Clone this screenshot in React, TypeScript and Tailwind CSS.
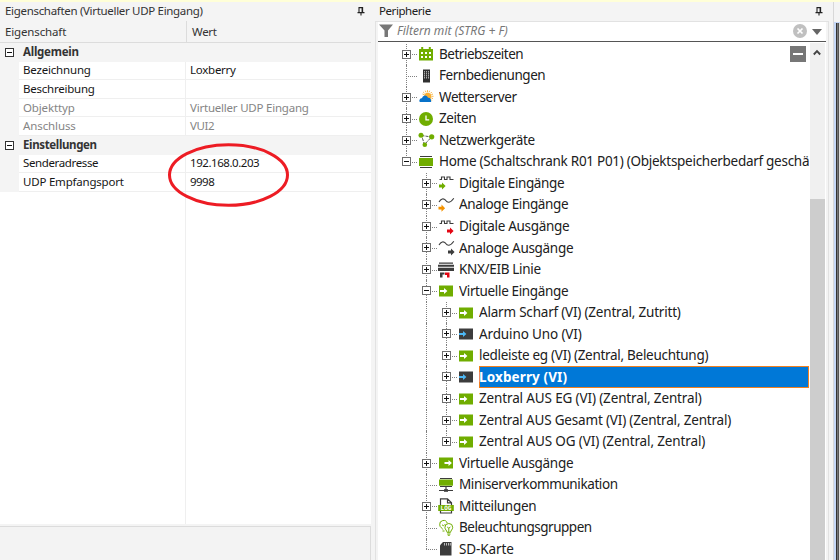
import { useLayoutEffect, useRef, useState } from "react";
import type { ReactNode } from "react";

/** One line of text whose tracking is adjusted so that it fills `width` pixels. */
function Fit({ text, width, className = "" }: { text: string; width: number; className?: string }) {
  const ref = useRef<HTMLSpanElement>(null);
  const [spacing, setSpacing] = useState(0);
  useLayoutEffect(() => {
    const el = ref.current;
    if (!el) return;
    el.style.letterSpacing = "0px";
    const natural = el.getBoundingClientRect().width;
    const next = (width - 0.8 - natural) / text.length;
    el.style.letterSpacing = `${next}px`;
    setSpacing(next);
  }, [text, width]);
  return (
    <span ref={ref} className={`inline-block whitespace-pre ${className}`} style={{ letterSpacing: `${spacing}px` }}>
      {text}
    </span>
  );
}

const GREEN = "#70ad00";
const DARK = "#3c3c3c";

function Svg({ children }: { children: ReactNode }) {
  return (
    <svg width="16" height="16" viewBox="0 0 16 16" className="block shrink-0 overflow-visible">
      {children}
    </svg>
  );
}

function Block({ fill, arrow, x }: { fill: string; arrow: string; x: number }) {
  return (
    <Svg>
      <rect x="0" y="2.5" width="14" height="11" fill={fill} />
      <path d={`M${x} 7h4V4.9l3.4 3.1-3.4 3.100V9h-4z`} fill={arrow} />
    </Svg>
  );
}

function SmallArrow({ x, y, fill }: { x: number; y: number; fill: string }) {
  return <path d={`M${x} ${y - 1.4}h3v-2.200l3.600 3.600-3.600 3.600v-2.200h-3z`} fill={fill} />;
}

const SQUARE = "M.5 4.500h2V2h3v2.500h2.500V2h3v2.500h3.500";
const WAVE = "M0 5C2 1.600 4.500.9 6.500 3.200 8.500 6 11 6.500 14.800 1.200";

const icons: Record<string, ReactNode> = {
  calendar: (
    <Svg>
      <path d="M0 3h2.200V1h2v2h5.600V1h2v2H14v11.500H0z" fill={GREEN} />
      <path d="M2 6h2v2H2zM6 6h2v2H6zM10 6h2v2h-2zM2 10h2v2H2zM6 10h2v2H6zM10 10h2v2h-2z" fill="#fff" />
    </Svg>
  ),
  remote: (
    <Svg>
      <rect x="4" y="1.500" width="7" height="13" fill="#303030" />
      <path d="M5.500 3v8M7.500 3v8M9.500 3v8" stroke="#ccc" strokeWidth=".8" strokeDasharray="1.500 .5" />
    </Svg>
  ),
  weather: (
    <Svg>
      <path
        d="M8.500 1.200v2M4.200 3l1.300 1.300M12.800 3l-1.300 1.300M12.500 7.300h2M12.800 11.500l-1.300-1.300M6.300 1.700l.7 1.600M10.700 1.700 10 3.300M14 5l-1.700.7M14 9.600l-1.700-.7M3.500 5l1.600.7"
        stroke="#f5b649"
        strokeWidth="1"
      />
      <circle cx="8.700" cy="7.300" r="3.600" fill="#fbb034" />
      <path d="M.8 13C-.5 11 1.500 9 3 9.300 4 6 7.500 5.500 9 8.800c2-.3 3.200 1 3.200 4.200z" fill="#0872c9" />
    </Svg>
  ),
  clock: (
    <Svg>
      <circle cx="7" cy="8" r="7" fill={GREEN} />
      <path d="M7 4.500V8.800h3.200" fill="none" stroke="#fff" strokeWidth="1.300" />
    </Svg>
  ),
  network: (
    <Svg>
      <path d="M2.500 3.500 12.500 5 5.500 12.500z" fill="none" stroke="#555" strokeWidth="1" strokeDasharray="3 1" />
      <circle cx="2" cy="3.200" r="2.500" fill={GREEN} />
      <circle cx="12.700" cy="4.800" r="2.600" fill={GREEN} />
      <circle cx="5.800" cy="12.800" r="2.300" fill={GREEN} />
    </Svg>
  ),
  home: (
    <Svg>
      <path d="M1 2.500h12M1 13.500h12" stroke={DARK} strokeWidth="1.100" />
      <rect y="4" width="14" height="8" fill={GREEN} />
    </Svg>
  ),
  din: (
    <Svg>
      <path d={SQUARE} fill="none" stroke={DARK} strokeWidth="1.100" />
      <SmallArrow x={0} y={11} fill={GREEN} />
    </Svg>
  ),
  ain: (
    <Svg>
      <path d={WAVE} fill="none" stroke={DARK} strokeWidth="1.100" />
      <SmallArrow x={-0.5} y={11.2} fill="#f39200" />
    </Svg>
  ),
  dout: (
    <Svg>
      <path d={SQUARE} fill="none" stroke={DARK} strokeWidth="1.100" />
      <SmallArrow x={8} y={12} fill="#e30613" />
    </Svg>
  ),
  aout: (
    <Svg>
      <path d={WAVE} fill="none" stroke={DARK} strokeWidth="1.100" />
      <SmallArrow x={9} y={12} fill={DARK} />
    </Svg>
  ),
  knx: (
    <Svg>
      <path d="M0 .5h14v1.200H0zM-1 2.700h16v2H-1zM-1 5.700h16v3.300H-1z" fill={DARK} />
      <path d="M1 10.500h4.500v2H3.500v3H1z" fill={DARK} />
      <path d="M6 10.500h4.500v5H8v-2.500H6z" fill="#e30613" />
    </Svg>
  ),
  vin: <Block fill={GREEN} arrow="#fff" x={1} />,
  vdark: <Block fill={DARK} arrow="#4db8f5" x={0} />,
  vout: <Block fill={GREEN} arrow="#fff" x={5.5} />,
  mini: (
    <Svg>
      <path d="M1 1.500h12M1 9.500h12" stroke={DARK} strokeWidth="1.100" />
      <rect y="2.500" width="14" height="6.200" fill={GREEN} />
      <path d="M7 10v3M0 13.500h14" stroke={DARK} strokeWidth="1.200" />
      <path d="M5 12.200h4v2.600H5z" fill={DARK} />
    </Svg>
  ),
  log: (
    <Svg>
      <path d="M1.500 7V.8h7l4 4V7M1.500 13v2h11v-2M8.500.8v4h4" fill="none" stroke={DARK} strokeWidth="1.200" />
      <path d="M-.8 7h15.600v6H-.8z" fill={GREEN} />
      <text x="7" y="12" textAnchor="middle" fill="#fff" className="font-['DejaVu_Sans_Mono'] text-[6px] font-bold">
        LOG
      </text>
    </Svg>
  ),
  bulbs: (
    <Svg>
      <g fill="none" stroke={GREEN} strokeWidth="1">
        <path d="M3.800 9.500C3.800 8.200.7 7.500.7 4.800A3.900 3.900 0 0 1 8.300 3.200M3.500 11h2M3 4.800l1.500 1L6 4.300" />
        <path d="M8 12.300c0-1.800-2.100-2.800-2.100-4.900a3.900 3.900 0 0 1 7.800 0c0 2.100-2.100 3.100-2.100 4.900zM8.200 14h3.300M8.800 15.300h2M8.200 7l1.600 1.200L11.400 7M9.800 8.200v4" />
      </g>
    </Svg>
  ),
  sd: (
    <Svg>
      <path d="M4 1h8.500v13.500H1V4.300z" fill={DARK} />
      <path d="M5.500 2v2.500M7.500 2v2.500M9.500 2v2.500M11.300 2v2.500" stroke="#ddd" strokeWidth=".8" />
    </Svg>
  ),
};

type Node = { level: 1 | 2 | 3; text: string; width: number; icon: string; box?: "+" | "-"; selected?: boolean };

const nodes: Node[] = [
  { level: 1, text: "Betriebszeiten", width: 85, icon: "calendar", box: "+" },
  { level: 1, text: "Fernbedienungen", width: 107, icon: "remote" },
  { level: 1, text: "Wetterserver", width: 78.5, icon: "weather", box: "+" },
  { level: 1, text: "Zeiten", width: 38, icon: "clock", box: "+" },
  { level: 1, text: "Netzwerkgeräte", width: 96.5, icon: "network", box: "+" },
  { level: 1, text: "Home (Schaltschrank R01 P01) (Objektspeicherbedarf geschä", width: 371, icon: "home", box: "-" },
  { level: 2, text: "Digitale Eingänge", width: 106, icon: "din", box: "+" },
  { level: 2, text: "Analoge Eingänge", width: 110, icon: "ain", box: "+" },
  { level: 2, text: "Digitale Ausgänge", width: 111, icon: "dout", box: "+" },
  { level: 2, text: "Analoge Ausgänge", width: 115, icon: "aout", box: "+" },
  { level: 2, text: "KNX/EIB Linie", width: 82.5, icon: "knx", box: "+" },
  { level: 2, text: "Virtuelle Eingänge", width: 110, icon: "vin", box: "-" },
  { level: 3, text: "Alarm Scharf (VI) (Zentral, Zutritt)", width: 202.5, icon: "vin", box: "+" },
  { level: 3, text: "Arduino Uno (VI)", width: 103.5, icon: "vdark", box: "+" },
  { level: 3, text: "ledleiste eg (VI) (Zentral, Beleuchtung)", width: 230, icon: "vin", box: "+" },
  { level: 3, text: "Loxberry (VI)", width: 89, icon: "vdark", box: "+", selected: true },
  { level: 3, text: "Zentral AUS EG (VI) (Zentral, Zentral)", width: 223.5, icon: "vin", box: "+" },
  { level: 3, text: "Zentral AUS Gesamt (VI) (Zentral, Zentral)", width: 253, icon: "vin", box: "+" },
  { level: 3, text: "Zentral AUS OG (VI) (Zentral, Zentral)", width: 227, icon: "vin", box: "+" },
  { level: 2, text: "Virtuelle Ausgänge", width: 115, icon: "vout", box: "+" },
  { level: 2, text: "Miniserverkommunikation", width: 159.5, icon: "mini" },
  { level: 2, text: "Mitteilungen", width: 78, icon: "log", box: "+" },
  { level: 2, text: "Beleuchtungsgruppen", width: 133.5, icon: "bulbs" },
  { level: 2, text: "SD-Karte", width: 55.5, icon: "sd" },
];

function Guide({ half = false }: { half?: boolean }) {
  return <div className={`w-px border-l border-dotted border-[#808080] ${half ? "h-1/2" : "h-full"}`} />;
}

function Expander({ sign }: { sign: "+" | "-" }) {
  return (
    <svg width="9" height="9" viewBox="0 0 9 9" className="block bg-white">
      <rect x=".5" y=".5" width="8" height="8" fill="none" stroke="#6f6f6f" />
      <path d={sign === "+" ? "M2 4.500h5M4.500 2v5" : "M2 4.500h5"} stroke="#111" />
    </svg>
  );
}

function TreeRow({ node, index }: { node: Node; index: number }) {
  const later = nodes.slice(index + 1);
  const nextUp = later.findIndex((n) => n.level < node.level);
  const siblings = nextUp < 0 ? later : later.slice(0, nextUp);
  const isLast = !siblings.some((n) => n.level === node.level);
  return (
    <div className="flex h-[21.540px] shrink-0 items-center">
      <div className="h-full w-[18px] shrink-0" />
      {node.level > 1 && <div className="h-full w-5 shrink-0" />}
      {node.level > 2 && (
        <div className="flex h-full w-5 shrink-0 pl-[10px]">
          <Guide />
        </div>
      )}
      <div className="relative h-full w-[23px] shrink-0 pl-[10px]">
        <Guide half={isLast} />
        <div className="absolute top-1/2 left-[10px] w-[11px] border-t border-dotted border-[#808080]" />
        {node.box && (
          <div className="absolute top-[6px] left-[6px]">
            <Expander sign={node.box} />
          </div>
        )}
      </div>
      <div className="w-5 shrink-0">{icons[node.icon]}</div>
      {node.selected ? (
        <div className="mr-px flex h-[21.500px] min-w-0 flex-1 items-center border border-[#f08020] bg-[#0078d7] font-bold text-white">
          <Fit text={node.text} width={node.width} className="-ml-px" />
        </div>
      ) : (
        <div className="mr-px min-w-0 flex-1 overflow-hidden leading-[21px]">
          <Fit text={node.text} width={node.width} />
        </div>
      )}
    </div>
  );
}

function Pin() {
  return (
    <svg width="8" height="9" viewBox="0 0 8 9" className="block">
      <path d="M2 5.500V.6h3.500v4.900M.5 5.600h7M4 6v2.500" fill="none" stroke="#222" strokeWidth="1.100" />
      <path d="M4.600 0h1.500v5.500H4.600z" fill="#222" />
    </svg>
  );
}

type Prop = { name: string; w: number; value?: string; vw?: number; heading?: boolean; muted?: boolean };

const props: Prop[] = [
  { name: "Allgemein", w: 56.5, heading: true },
  { name: "Bezeichnung", w: 68.5, value: "Loxberry", vw: 46.5 },
  { name: "Beschreibung", w: 72.5 },
  { name: "Objekttyp", w: 52.5, value: "Virtueller UDP Eingang", vw: 119.5, muted: true },
  { name: "Anschluss", w: 53.5, value: "VUI2", vw: 25, muted: true },
  { name: "Einstellungen", w: 74.5, heading: true },
  { name: "Senderadresse", w: 76, value: "192.168.0.203", vw: 70 },
  { name: "UDP Empfangsport", w: 101.5, value: "9998", vw: 25 },
];

function PropertyRow({ p }: { p: Prop }) {
  if (p.heading) {
    return (
      <div className="flex h-[18.600px] items-center bg-[#f4f4f4] font-bold text-[#333]">
        <div className="w-[23px] pl-[5px]">
          <svg width="9" height="9" viewBox="0 0 9 9" className="block">
            <rect x=".5" y=".5" width="8" height="8" fill="#fff" stroke="#333" />
            <path d="M2 4.500h5" stroke="#111" />
          </svg>
        </div>
        <Fit text={p.name} width={p.w} />
      </div>
    );
  }
  return (
    <div className={`flex h-[18.600px] ${p.muted ? "text-[#858585]" : "text-[#161616]"}`}>
      <div className="w-[19px] bg-[#f4f4f4]" />
      <div className="flex w-[167px] items-center border-r border-b border-[#efefef] pl-1">
        <Fit text={p.name} width={p.w} />
      </div>
      <div className="flex flex-1 items-center border-b border-[#efefef] pl-[4px]">
        {p.value && <Fit text={p.value} width={p.vw ?? 0} />}
      </div>
    </div>
  );
}

function PropertiesPanel() {
  return (
    <section className="flex w-[375px] shrink-0 flex-col pr-1 text-[11.500px] leading-4">
      <header className="flex h-[19px] shrink-0 items-center justify-between pr-[6px] pl-[5px] text-[#333]">
        <Fit text="Eigenschaften (Virtueller UDP Eingang)" width={198.5} />
        <Pin />
      </header>
      <div className="flex h-[22.500px] shrink-0 border-b border-[#dcdcdc] text-[#333]">
        <div className="flex w-[187px] items-center border-r border-[#dcdcdc] pt-px pl-[5px]">
          <Fit text="Eigenschaft" width={62} />
        </div>
        <div className="flex items-center pt-px pl-[5px]">
          <Fit text="Wert" width={25.5} />
        </div>
      </div>
      <div className="relative flex min-h-0 flex-1 flex-col bg-white">
        {props.map((p) => (
          <PropertyRow key={p.name} p={p} />
        ))}
        <div className="w-[186px] flex-1 border-r border-[#efefef]" />
        <svg width="124" height="68" viewBox="0 0 124 68" className="absolute top-[98px] left-[166px]">
          <ellipse cx="62.500" cy="34" rx="59" ry="30.300" fill="none" stroke="#ed1c24" strokeWidth="3" />
        </svg>
      </div>
      <div className="h-[36px] shrink-0 pt-[2px]">
        <div className="h-full border-t border-r border-[#dcdcdc] bg-[#f3f3f3]" />
      </div>
    </section>
  );
}

function PeripheryPanel() {
  return (
    <section className="flex w-[458px] shrink-0 flex-col text-[#202020]">
      <header className="flex h-[19px] shrink-0 items-center justify-between pr-[10px] pl-1 text-[11.500px]">
        <Fit text="Peripherie" width={52.5} />
        <Pin />
      </header>
      <div className="mr-[4px] flex min-h-0 flex-1 flex-col border-x border-t border-[#e2e2e2] pr-[2px] pl-[2px]">
        <div className="flex h-[20px] shrink-0 items-center border-b border-[#555] bg-white">
          <svg width="15" height="14" viewBox="0 0 15 14" className="ml-[1px] block">
            <path d="M0 .5h14L9 6.500V13H5.500V6.500z" fill="#777" />
          </svg>
          <Fit text="Filtern mit (STRG + F)" width={111.5} className="ml-[3px] text-[12px] text-[#777] italic" />
          <div className="flex-1" />
          <svg width="14" height="14" viewBox="0 0 14 14" className="block">
            <circle cx="7" cy="7" r="7" fill="#c0c0c0" />
            <path d="m4.500 4.500 5 5m0-5-5 5" stroke="#fff" strokeWidth="1.700" />
          </svg>
          <svg width="10" height="6" viewBox="0 0 10 6" className="mt-px mr-[4px] ml-[5px] block">
            <path d="M0 0h10L5 6z" fill="#666" />
          </svg>
        </div>
        <div className="flex min-h-0 flex-1 bg-white">
          <div className="relative w-[432px] shrink-0 overflow-hidden pt-[2px] font-['Noto_Sans'] text-[13.500px]">
            {nodes.map((n, i) => (
              <TreeRow key={i} node={n} index={i} />
            ))}
            <div className="absolute top-[4px] right-[4px] flex h-4 w-4 items-center justify-center bg-[#777]">
              <div className="h-[2px] w-[10px] bg-white" />
            </div>
          </div>
          <div className="mt-px flex w-[15px] flex-col bg-[#f0f0f0]">
            <svg width="8" height="7" viewBox="0 0 8 7" className="mt-[6px] ml-[3px] block">
              <path d="M.8 5.500 4 2.200l3.200 3.300" fill="none" stroke="#444" strokeWidth="1.900" />
            </svg>
            <div className="mt-[143px] w-[15px] flex-1 bg-[#cdcdcd]" />
          </div>
        </div>
      </div>
    </section>
  );
}

export default function App() {
  return (
    <main className="flex h-[560px] w-[840px] flex-col overflow-hidden bg-[#f4f4f4] font-['Noto_Sans','Open_Sans',sans-serif]">
      <div className="h-[1.500px] shrink-0 bg-[#ffffd8]" />
      <div className="flex min-h-0 flex-1">
        <PropertiesPanel />
        <PeripheryPanel />
        <div className="flex flex-1 flex-col border-l border-[#d8d8d8]">
          <div className="h-[20px] shrink-0" />
          <div className="flex flex-1 border-t border-l-2 border-[#c6d8f8]">
            <div className="w-px bg-[#333]" />
            <div className="w-px bg-[#777]" />
            <div className="w-px bg-[#555]" />
            <div className="flex-1 bg-[#ddd]" />
          </div>
        </div>
      </div>
    </main>
  );
}
